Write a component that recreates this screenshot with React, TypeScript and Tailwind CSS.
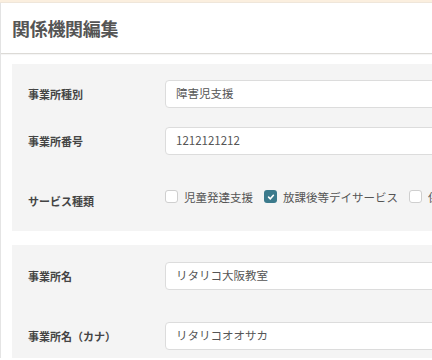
const font = { fontFamily: '"Noto Sans CJK JP", "Noto Sans", sans-serif' }

function Field({ value }: { value: string }) {
     return (
          <div className="flex-1 h-[28px] bg-white border border-[#dcdcdc] rounded-[4px] flex items-center px-[10px] text-[11.5px] text-[#555]">
               {value}
          </div>
     )
}

function Check({ label, checked }: { label: string; checked?: boolean }) {
     return (
          <label className="flex items-center gap-[6px] text-[11.5px] leading-[12px] text-[#555] whitespace-nowrap">
               {checked ? (
                    <span className="w-[13px] h-[13px] rounded-[3px] bg-[#3b7a8c] flex items-center justify-center">
                         <svg width="8" height="8" viewBox="0 0 10 10" fill="none" stroke="white" strokeWidth="2" strokeLinecap="round" strokeLinejoin="round">
                              <path d="M2 5.2 4.2 7.3 8 2.8" />
                         </svg>
                    </span>
               ) : (
                    <span className="w-[13px] h-[13px] rounded-[3px] bg-white border border-[#cfcfcf]" />
               )}
               {label}
          </label>
     )
}

export default function App() {
     return (
          <div className="w-[432px] h-[360px] overflow-hidden bg-white" style={font}>
               <div className="w-[620px]">
                    <div className="h-[3px] bg-[#fbefdf] border-b border-[#efe6da]" />
                    <div className="border-l border-[#e4e4e4]">
                         <div className="h-[51px] flex items-center pl-[11px] border-b border-[#dcdad6] shadow-[0_1px_1px_rgba(0,0,0,0.04)]">
                              <h1 className="text-[18px] font-bold text-[#555] tracking-[-0.3px]">関係機関編集</h1>
                         </div>

                         <div className="ml-[11px] mt-[10px] bg-[#f4f4f4] pl-[16px] pt-[16px]">
                              <div className="flex items-center">
                                   <div className="w-[137px] text-[11px] font-bold text-[#444]">事業所種別</div>
                                   <Field value="障害児支援" />
                              </div>
                              <div className="flex items-center mt-[19px]">
                                   <div className="w-[137px] text-[11px] font-bold text-[#444]">事業所番号</div>
                                   <Field value="1212121212" />
                              </div>
                              <div className="flex items-start mt-[35px] h-[41px]">
                                   <div className="w-[137px] text-[11px] leading-[14px] pt-[4px] font-bold text-[#444]">サービス種類</div>
                                   <div className="flex items-center gap-[11px]">
                                        <Check label="児童発達支援" />
                                        <Check label="放課後等デイサービス" checked />
                                        <Check label="保育所等訪問支援" />
                                   </div>
                              </div>
                         </div>

                         <div className="ml-[11px] mt-[14px] bg-[#f4f4f4] pl-[16px] pt-[17px] pb-[8px]">
                              <div className="flex items-center">
                                   <div className="w-[137px] text-[11px] font-bold text-[#444]">事業所名</div>
                                   <Field value="リタリコ大阪教室" />
                              </div>
                              <div className="flex items-center mt-[32px]">
                                   <div className="w-[137px] text-[11px] font-bold text-[#444]">事業所名（カナ）</div>
                                   <Field value="リタリコオオサカ" />
                              </div>
                         </div>
                    </div>
               </div>
          </div>
     )
}
